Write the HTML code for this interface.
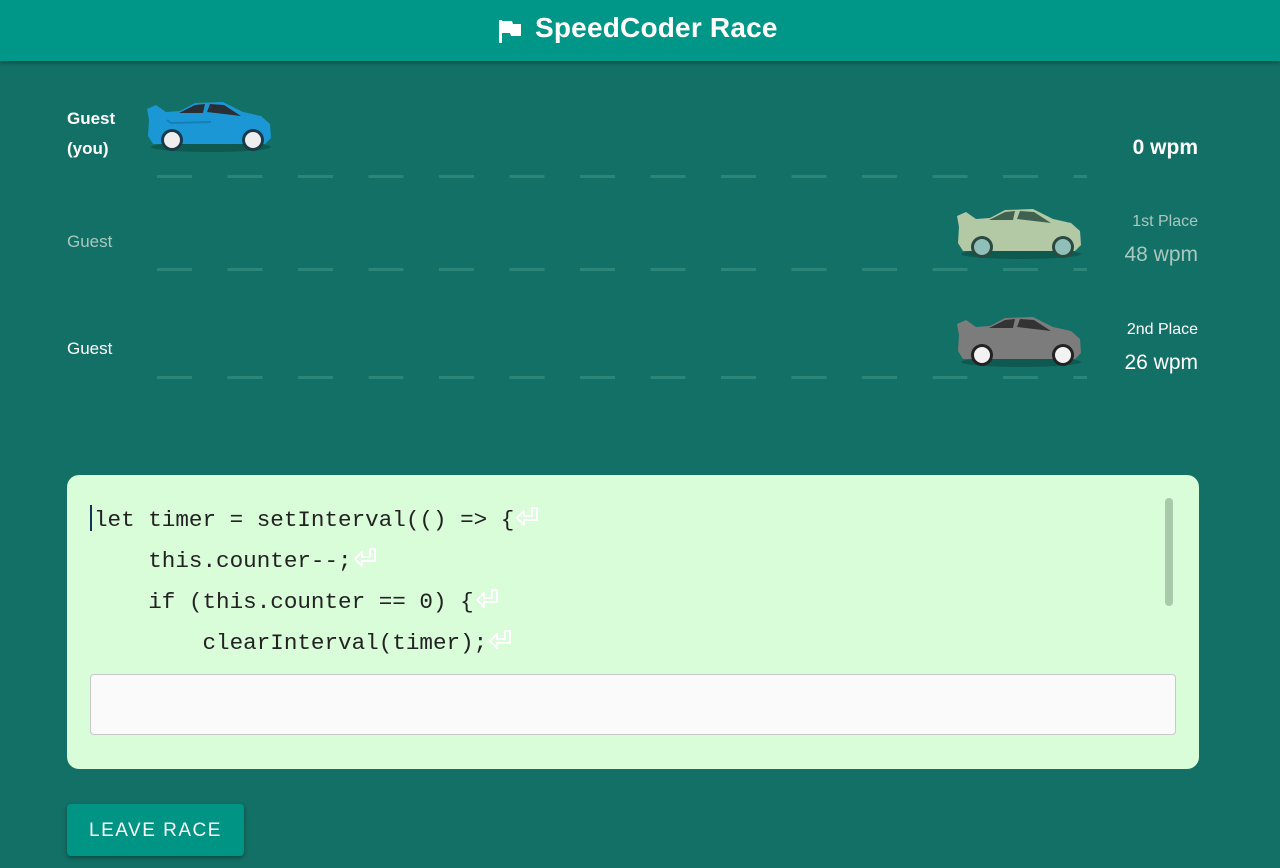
<!DOCTYPE html>
<html><head><meta charset="utf-8"><style>
*{margin:0;padding:0;box-sizing:border-box}
body{width:1280px;height:868px;background:#137066;font-family:"Liberation Sans",sans-serif;position:relative;overflow:hidden;color:#fff}
.hdr{position:absolute;left:0;top:0;width:1280px;height:61px;background:#009688;box-shadow:0 2px 4px rgba(0,0,0,.3)}
.hdr .t{position:absolute;left:535px;top:12px;font-size:28px;font-weight:bold;letter-spacing:0.2px}
.flag{position:absolute;left:498px;top:19px}
.lbl{position:absolute;font-size:17px}
.r{position:absolute;right:82px;text-align:right;white-space:nowrap}
.dash{position:absolute;left:157px;width:930px;height:3px;background:repeating-linear-gradient(90deg,#2b8578 0 35px,transparent 35px 70.5px)}
.car{position:absolute}
.panel{position:absolute;left:67px;top:475px;width:1132px;height:294px;background:#d9fcd9;border-radius:12px}
.code{position:absolute;left:94px;top:500px;font-family:"Liberation Mono",monospace;font-size:22.6px;line-height:41px;color:#222;white-space:pre}
.ret{display:inline-block;width:28px;height:26px;vertical-align:-5px}
.cur{position:absolute;left:90px;top:505px;width:2px;height:26px;background:#135}
.sb{position:absolute;left:1165px;top:498px;width:8px;height:108px;background:#aac9aa;border-radius:4px}
.inp{position:absolute;left:90px;top:674px;width:1086px;height:61px;background:#fafafa;border:1px solid #c8c8c8;border-radius:4px}
.btn{position:absolute;left:67px;top:804px;width:177px;height:52px;background:#009485;border-radius:4px;box-shadow:0 2px 4px rgba(0,0,0,.35);font-size:19px;letter-spacing:1.5px;text-align:center;line-height:54px}
</style></head><body>
<svg width="0" height="0" style="position:absolute"><defs>
<symbol id="rt" viewBox="0 0 28 26"><path d="M18 3h5v12H10v5L3 13l7-7v5h8z" fill="none" stroke="#fff" stroke-width="2" stroke-linejoin="round"/></symbol>
</defs></svg>
<div class="hdr">
<svg class="flag" width="24" height="24" viewBox="0 0 24 24"><path d="M1 1h3v23H1z M4 2h10l1 3h8v12H13l-1-3H4z" fill="#fff"/></svg>
<div class="t">SpeedCoder Race</div>
</div>

<div class="lbl" style="left:67px;top:104px;font-weight:bold;line-height:30px">Guest<br>(you)</div>
<div class="r" style="top:136px;font-weight:bold;font-size:21px">0 wpm</div>
<div class="dash" style="top:175px"></div>

<div class="lbl" style="left:67px;top:232px;color:#a9c8bf">Guest</div>
<div class="r" style="top:213px;color:#a9c8bf;font-size:16px">1st Place</div>
<div class="r" style="top:243px;color:#a9c8bf;font-size:21px">48 wpm</div>
<div class="dash" style="top:268px"></div>

<div class="lbl" style="left:67px;top:339px">Guest</div>
<div class="r" style="top:321px;font-size:16px">2nd Place</div>
<div class="r" style="top:351px;font-size:21px">26 wpm</div>
<div class="dash" style="top:376px"></div>

<svg class="car" style="left:145px;top:100px" width="130" height="56" viewBox="0 0 130 56">
<ellipse cx="66" cy="47" rx="60" ry="5" fill="#0e5a50"/>
<path d="M4 20L2 9l9-4 10 7 14-1 15-8 28-1 20 10 18 4 9 8 1 14-6 6H8L3 36z" fill="#1a97d4"/>
<path d="M22 20l4 3 40-1" fill="none" stroke="#1580b8" stroke-width="2"/>
<path d="M34 13l16-8 10-1-2 9z M62 12l3-8 14 1 17 11z" fill="#2a2f35"/>
<circle cx="27" cy="40" r="11" fill="#1a3a4a"/><circle cx="27" cy="40" r="8" fill="#eee"/>
<circle cx="108" cy="40" r="11" fill="#1a3a4a"/><circle cx="108" cy="40" r="8" fill="#eee"/>
</svg>
<svg class="car" style="left:955px;top:207px" width="130" height="56" viewBox="0 0 130 56">
<ellipse cx="66" cy="47" rx="60" ry="5" fill="#0e5a50"/>
<path d="M4 20L2 9l9-4 10 7 14-1 15-8 28-1 20 10 18 4 9 8 1 14-6 6H8L3 36z" fill="#b3c9a6"/>
<path d="M34 13l16-8 10-1-2 9z M62 12l3-8 14 1 17 11z" fill="#3f6150"/>
<circle cx="27" cy="40" r="11" fill="#2a4a40"/><circle cx="27" cy="40" r="8" fill="#8fbfb8"/>
<circle cx="108" cy="40" r="11" fill="#2a4a40"/><circle cx="108" cy="40" r="8" fill="#8fbfb8"/>
</svg>
<svg class="car" style="left:955px;top:315px" width="130" height="56" viewBox="0 0 130 56">
<ellipse cx="66" cy="47" rx="60" ry="5" fill="#0e5a50"/>
<path d="M4 20L2 9l9-4 10 7 14-1 15-8 28-1 20 10 18 4 9 8 1 14-6 6H8L3 36z" fill="#7c7c7c"/>
<path d="M34 13l16-8 10-1-2 9z M62 12l3-8 14 1 17 11z" fill="#333"/>
<circle cx="27" cy="40" r="11" fill="#222"/><circle cx="27" cy="40" r="8" fill="#f2f2f2"/>
<circle cx="108" cy="40" r="11" fill="#222"/><circle cx="108" cy="40" r="8" fill="#f2f2f2"/>
</svg>

<div class="panel"></div>
<div class="code">let timer = setInterval(() => {<svg class="ret"><use href="#rt"/></svg>
    this.counter--;<svg class="ret"><use href="#rt"/></svg>
    if (this.counter == 0) {<svg class="ret"><use href="#rt"/></svg>
        clearInterval(timer);<svg class="ret"><use href="#rt"/></svg></div>
<div class="cur"></div>
<div class="sb"></div>
<div class="inp"></div>
<div class="btn">LEAVE RACE</div>
</body></html>
